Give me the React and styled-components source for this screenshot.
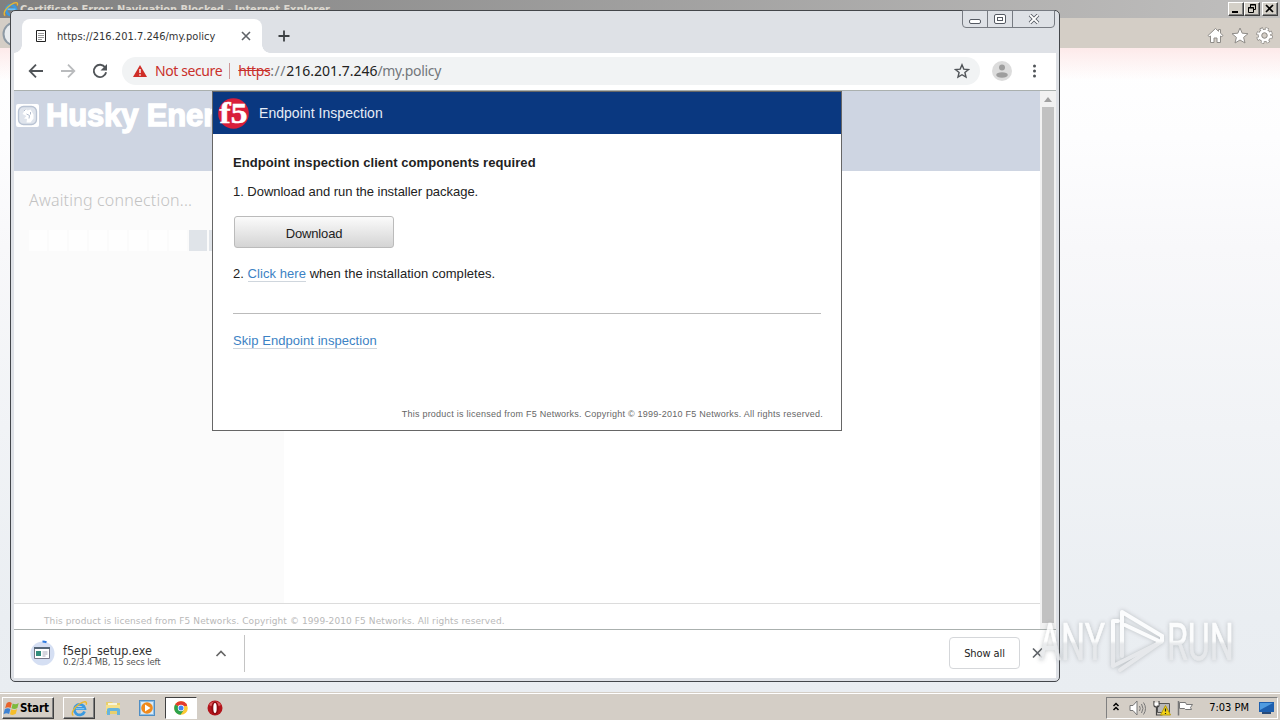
import React from 'react';
import styled, { createGlobalStyle } from 'styled-components';

const tahoma = "'DejaVu Sans Condensed', 'DejaVu Sans', sans-serif";
const arial = "'Liberation Sans', Arial, sans-serif";

const GlobalStyle = createGlobalStyle`
  * { box-sizing: border-box; }
  body { margin: 0; overflow: hidden; font-family: ${tahoma}; }
  svg { display: block; flex: none; }
`;

const Desktop = styled.div`
  position: relative;
  width: 1280px;
  height: 720px;
  overflow: hidden;
  display: flex;
  flex-direction: column;
`;

/* ---------- Internet Explorer in the back ---------- */

const IeTitleBar = styled.div`
  height: 18px;
  flex: none;
  display: flex;
  align-items: center;
  padding: 0 2px 0 3px;
  background: linear-gradient(90deg, #808080, #c0bfbe);
`;

const IeTitle = styled.span`
  flex: 1;
  color: #dcd8d0;
  font: bold 11px/16px ${tahoma};
  letter-spacing: -0.04px;
  padding: 1px 0 0 1px;
  white-space: nowrap;
`;

const ClassicButtons = styled.div`
  display: flex;
  margin-top: -1px;
`;

const ClassicButton = styled.div`
  width: 16px;
  height: 14px;
  margin-left: ${p => (p.$gap ? '2px' : 0)};
  background: #d4d0c8;
  border: 1px solid;
  border-color: #fff #404040 #404040 #fff;
  box-shadow: inset -1px -1px #808080;
`;

const IeToolBar = styled.div`
  height: 30px;
  flex: none;
  display: flex;
  align-items: center;
  justify-content: space-between;
  padding: 4px 7px 0 2px;
  background: #d4cec6;
`;

const IeTools = styled.div`
  display: flex;
  gap: 7px;
`;

const IeBody = styled.div`
  flex: 1;
  background:
    linear-gradient(#fdeaea, rgba(255, 255, 255, 0) 32px),
    linear-gradient(#ffffff 0, #fdfdfe 90px, #f8f8fa 200px, #f1f3f6 380px, #eaeef2 570px, #e9edf1 100%);
`;

/* ---------- Chrome window ---------- */

const ChromeWindow = styled.div`
  position: absolute;
  left: 10px;
  top: 10px;
  width: 1050px;
  height: 672px;
  padding: 0 3px 3px;
  display: flex;
  flex-direction: column;
  background: #dee1e6;
  border: 1px solid #43464a;
  border-radius: 5px;
`;

const TabStrip = styled.div`
  height: 42px;
  flex: none;
  display: flex;
  align-items: flex-end;
`;

const Tab = styled.div`
  position: relative;
  width: 240px;
  height: 34px;
  margin-left: 8px;
  padding: 0 10px 0 13px;
  display: flex;
  align-items: center;
  background: #fff;
  border-radius: 8px 8px 0 0;

  &::before,
  &::after {
    content: '';
    position: absolute;
    bottom: 0;
    width: 8px;
    height: 8px;
  }
  &::before {
    left: -8px;
    background: radial-gradient(circle at 0 0, #dee1e6 7.5px, #fff 8px);
  }
  &::after {
    right: -8px;
    background: radial-gradient(circle at 100% 0, #dee1e6 7.5px, #fff 8px);
  }
`;

const TabTitle = styled.span`
  flex: 1;
  margin-left: 10px;
  color: #333;
  font-size: 11px;
  letter-spacing: 0.03px;
  white-space: nowrap;
`;

const NewTab = styled.div`
  width: 44px;
  height: 34px;
  display: flex;
  align-items: center;
  justify-content: center;
`;

const CaptionButtons = styled.div`
  align-self: flex-start;
  margin: -1px 1px 0 auto;
  height: 18px;
  display: flex;
  border: 1px solid #777b82;
  border-radius: 0 0 4px 4px;
`;

const CaptionButton = styled.div`
  width: ${p => p.$width}px;
  display: flex;
  align-items: center;
  justify-content: center;
  border-left: ${p => (p.$first ? 'none' : '1px solid #777b82')};
`;

const ToolBar = styled.div`
  height: 38px;
  flex: none;
  display: flex;
  align-items: center;
  padding: 0 11px 2px 14px;
  background: #fff;
  border-bottom: 1px solid #aab0ae;
`;

const NavIcons = styled.div`
  display: flex;
  gap: 16px;
`;

const Omnibox = styled.div`
  height: 28px;
  width: 858px;
  margin-left: 14px;
  padding: 0 10px;
  display: flex;
  align-items: center;
  background: #f1f3f4;
  border-radius: 14px;
  font-family: 'Noto Sans', 'Open Sans', sans-serif;
  font-size: 14px;
  white-space: nowrap;
`;

const NotSecure = styled.span`
  margin-left: 7px;
  color: #c9302b;
  letter-spacing: -0.4px;
`;

const Divider = styled.span`
  width: 1px;
  height: 16px;
  margin: 0 8px 0 7px;
  background: #c99;
`;

const Url = styled.span`
  flex: 1;
  color: #73777b;
  letter-spacing: -0.33px;

  s { color: #c9302b; letter-spacing: -0.42px; }
  i { font-style: normal; letter-spacing: 0.6px; }
  b { color: #222; font-weight: 400; letter-spacing: 0; }
`;

const Avatar = styled.div`
  margin: 0 auto 0 12px;
`;

const PageArea = styled.div`
  height: 538px;
  flex: none;
  display: flex;
  background: #fff;
`;

const Page = styled.div`
  flex: 1;
  display: flex;
  flex-direction: column;
`;

const Banner = styled.div`
  height: 80px;
  padding: 8px 0 0 2px;
  display: flex;
  align-items: flex-start;
  gap: 6px;
  overflow: hidden;
  background: #ced5e2;
`;

const BrandName = styled.span`
  color: #fff;
  font: bold 31px/33px ${arial};
  letter-spacing: -0.15px;
  -webkit-text-stroke: 1.4px #fff;
  white-space: nowrap;
`;

const SidePanel = styled.div`
  flex: 1;
  width: 270px;
  padding: 17px 0 0 15px;
  background: #fbfbfb;
`;

const Waiting = styled.div`
  color: #c2c2c2;
  font: 300 16px/24px 'Noto Sans', 'Open Sans', sans-serif;
  letter-spacing: 0.2px;
  white-space: nowrap;
`;

const ProgressRow = styled.div`
  margin-top: 18px;
  display: flex;
  gap: 2px;
`;

const ProgressCell = styled.div`
  width: 18px;
  height: 21px;
  background: ${p => (p.$on ? '#e0e4e9' : '#fefefe')};
`;

const PageFooter = styled.div`
  height: 26px;
  padding: 9px 0 0 30px;
  border-top: 1px solid #dcdcdc;
  background: #fff;
  color: #b9b9b9;
  font: 9px/16px 'DejaVu Sans', sans-serif;
  letter-spacing: 0.09px;
  white-space: nowrap;
`;

const ScrollBar = styled.div`
  width: 16px;
  display: flex;
  flex-direction: column;
  align-items: center;
  padding-top: 6px;
  background: #f1f1f1;
`;

const ScrollThumb = styled.div`
  width: 12px;
  height: 516px;
  margin-top: 5px;
  background: #c1c1c1;
`;

const DownloadShelf = styled.div`
  flex: 1;
  display: flex;
  align-items: center;
  padding: 0 12px 2px 15px;
  border-top: 1px solid #aab0ae;
  background: #fff;
`;

const DownloadText = styled.div`
  width: 151px;
  margin-left: 7px;
  padding-top: 3px;
  white-space: nowrap;
`;

const FileName = styled.div`
  color: #333;
  font: 12.5px/13px ${tahoma};
`;

const FileStatus = styled.div`
  color: #555;
  font: 9.5px/9px ${tahoma};
  letter-spacing: -0.12px;
`;

const ShelfDivider = styled.div`
  width: 1px;
  height: 37px;
  margin-left: 16px;
  background: #c4c4c4;
`;

const ShowAll = styled.div`
  width: 71px;
  height: 32px;
  margin: 0 11px 0 auto;
  border: 1px solid #d5d7da;
  border-radius: 4px;
  color: #222;
  font: 11px/31px ${tahoma};
  letter-spacing: -0.1px;
  text-align: center;
`;

/* ---------- Endpoint inspection dialog ---------- */

const Dialog = styled.div`
  position: absolute;
  left: 212px;
  top: 91px;
  width: 630px;
  height: 340px;
  border: 1px solid #666;
  background: #fff;
  color: #222;
  font: 13px/16px ${arial};
  white-space: nowrap;
`;

const DialogHeader = styled.div`
  height: 42px;
  display: flex;
  align-items: center;
  gap: 10px;
  padding-left: 5px;
  background: #0a3880;
  color: #e6ecf6;
  font-size: 14px;
  letter-spacing: 0.04px;
`;

const DialogBody = styled.div`
  padding: 21px 20px 0;
`;

const DialogTitle = styled.div`
  font-weight: bold;
  letter-spacing: 0.08px;
`;

const Step = styled.div`
  margin-top: ${p => p.$top}px;
  letter-spacing: ${p => p.$spacing}px;
`;

const Link = styled.span`
  color: #3c82c4;
  border-bottom: 1px solid #cfd6dd;
  letter-spacing: 0.06px;
`;

const DownloadButton = styled.div`
  width: 160px;
  height: 32px;
  margin: 16px 0 0 1px;
  border: 1px solid #bbb;
  border-radius: 3px;
  background: linear-gradient(#fbfbfb, #d4d4d4);
  line-height: 33px;
  text-align: center;
  letter-spacing: -0.15px;
`;

const Rule = styled.div`
  height: 1px;
  margin: 31px 0 19px;
  background: #bbb;
`;

const License = styled.div`
  margin: 58px -2px 0 0;
  color: #666;
  font-size: 9px;
  line-height: 14px;
  letter-spacing: 0.24px;
  text-align: right;
`;

/* ---------- Taskbar ---------- */

const TaskBar = styled.div`
  height: 28px;
  flex: none;
  display: flex;
  align-items: center;
  padding: 3px 2px 0;
  background: #d4cec6;
  border-top: 1px solid #d4cec6;
  box-shadow: inset 0 1px #fff;
`;

const TaskButton = styled.div`
  width: ${p => p.$width || 32}px;
  height: 22px;
  margin-left: ${p => p.$left || 0}px;
  display: flex;
  align-items: center;
  justify-content: ${p => (p.$width ? 'flex-start' : 'center')};
  background: ${p => (p.$pressed ? '#fff' : 'transparent')};
  border: ${p => (p.$flat ? 'none' : '1px solid')};
  border-color: ${p => (p.$pressed ? '#404040 #fff #fff #404040' : '#fff #404040 #404040 #fff')};
  box-shadow: ${p => (p.$flat || p.$pressed ? 'none' : 'inset -1px -1px #808080')};
  color: #000;
  font: bold 11.5px/20px ${tahoma};
  letter-spacing: -0.15px;
`;

const Tray = styled.div`
  width: 172px;
  height: 22px;
  margin-left: auto;
  padding: 0 2px 0 5px;
  display: flex;
  align-items: center;
  border: 1px solid;
  border-color: #808080 #fff #fff #808080;
`;

const Clock = styled.span`
  margin: 0 10px 0 auto;
  color: #000;
  font: 11px/18px ${tahoma};
`;

const Watermark = styled.svg`
  position: absolute;
  left: 1034px;
  top: 604px;
  overflow: visible;
  filter: drop-shadow(0 0 2px rgba(120, 125, 130, 0.5));
`;

/* ---------- Icons ---------- */

const IeLogo = ({ size = 16 }) => (
  <svg width={size} height={size} viewBox="0 0 16 16" fill="none">
    <path d="M12.8 10.8A5 5 0 1 1 13 8H4.5" stroke="#3b9ae0" strokeWidth="2.6" />
    <path d="M12.5 8.2H4.6" stroke="#8fd0f5" strokeWidth="1" />
    <path d="M2.2 14.6C-.6 12.6 3 7 7.5 4S15.500 .5 14.300 4.500" stroke="#edb72c" strokeWidth="1.3" />
  </svg>
);

const FlagLogo = () => (
  <svg width="17" height="17" viewBox="0 0 17 17">
    <path d="M3.500 3.500Q6 1 8.800 3L7.600 8Q5 6.200 2.100 8.300Z" fill="#e8632b" />
    <path d="M9.700 3.500Q12.500 5.200 15.700 3L14.400 8Q11.500 10 8.500 8.300Z" fill="#7dba3c" />
    <path d="M1.800 9.200Q4.700 7.200 7.400 9L6.100 14Q3.400 12.200.5 14.300Z" fill="#3f83d3" />
    <path d="M8.200 9.300Q11.200 11 14.100 9L12.800 13.800Q9.800 15.800 7 14.200Z" fill="#f5bd2a" />
  </svg>
);

const F5Logo = () => (
  <svg width="31" height="32" viewBox="0 0 31 32">
    <circle cx="15.500" cy="16.500" r="15.300" fill="#d81e3a" />
    <text x="1.500" y="26" fill="#fff" stroke="#fff" strokeWidth=".5" fontFamily="'Liberation Serif', serif" fontWeight="bold" fontSize="30" textLength="28" lengthAdjust="spacingAndGlyphs">f5</text>
  </svg>
);

const HuskyLogo = () => (
  <svg width="24" height="31" viewBox="0 0 24 31">
    <rect x="0" y="5" width="23" height="23" rx="2" fill="#fff" />
    <rect x="2.500" y="7.500" width="18" height="18" rx="5" fill="#dfe4ec" stroke="#b9c3d3" strokeWidth="1.300" />
    <path d="M6.500 15l3-5 2 1.500 3-1 3 5v4l-3 4h-4l.5-3.500-3-.5 2.500-2.500z" fill="#fff" />
    <path d="M10.500 15l3 1.500-.5 3M14.500 13v2.500M8 12l1.500-1.500" stroke="#b2bccd" fill="none" />
  </svg>
);

const ExplorerIcon = () => (
  <svg width="17" height="16" viewBox="0 0 17 16">
    <path d="M1 2h6l1 1h7v11H1z" fill="#e8cf6d" />
    <path d="M3 3h9v3H3z" fill="#f8f4d8" />
    <path d="M1 5h14v6H1z" fill="#f5e08a" />
    <path d="M2 15V9.500Q2 8 4 8h9q2 0 2 1.500V15h-3v-4H5v4z" fill="#67b4dd" />
  </svg>
);

const PlayerIcon = () => (
  <svg width="16" height="16" viewBox="0 0 16 16">
    <rect x=".5" y=".5" width="15" height="15" fill="#8fbfe6" stroke="#4f8ec4" />
    <rect x="2" y="2" width="12" height="12" fill="#d9ebf8" />
    <circle cx="8" cy="8" r="5.800" fill="#f08a1d" />
    <path d="M6 4.500v7L11.500 8z" fill="#fff" />
  </svg>
);

const ChromeIcon = () => (
  <svg width="14" height="14" viewBox="0 0 14 14">
    <circle cx="7" cy="7" r="6.800" fill="#fcc934" />
    <path d="M7 7L1.100 3.600A6.800 6.800 0 0 1 12.900 3.600z" fill="#e33b2e" />
    <path d="M7 7L1.100 3.600A6.800 6.800 0 0 0 6.600 13.800L9.900 8.700z" fill="#2da24c" />
    <path d="M7 3.600h5.900L13 5H7z" fill="#e33b2e" />
    <circle cx="7" cy="7" r="3.200" fill="#fff" />
    <circle cx="7" cy="7" r="2.500" fill="#4285f4" />
  </svg>
);

const OperaIcon = () => (
  <svg width="16" height="16" viewBox="0 0 16 16">
    <circle cx="8" cy="8" r="7.500" fill="#b3141b" />
    <path d="M2 5a7 7 0 0 1 12 0L8 8z" fill="#dc5a5c" />
    <ellipse cx="8" cy="8" rx="3.600" ry="6.500" fill="#8d0b10" />
    <ellipse cx="8" cy="8" rx="1.700" ry="5" fill="#fff" />
  </svg>
);

const TrayIcons = () => (
  <svg width="88" height="18" viewBox="0 0 88 18" fill="none">
    <path d="M1.500 7L4 4.500 6.500 7M1.500 11L4 8.500 6.500 11" stroke="#000" strokeWidth="1.500" />
    <path d="M18 6.500h3l4-4.500v14l-4-4.500h-3z" fill="#fff" stroke="#777" />
    <path d="M27.500 7q1.500 2.500 0 5M29.500 5q3 4.500 0 9M31.500 3.500q4 6 0 12" stroke="#777" />
    <path d="M45.500 4.500h12v9h-12z" fill="#b8b8b8" stroke="#555" />
    <path d="M42 2v4q0 2 2.500 2t2.500-2V2M44.500 8v8h6" stroke="#444" strokeWidth="1.200" />
    <path d="M42.500 3.500h4v3h-4z" fill="#fff" />
    <path d="M53.500 6.500l5 9.500h-10z" fill="#f3d313" stroke="#b59b12" />
    <path d="M53.500 9.500v3M53.500 14v1" stroke="#222" strokeWidth="1.200" />
    <path d="M66.500 2v14.500" stroke="#777" strokeWidth="1.500" />
    <path d="M67.500 3.500h6l1 2h6l-2 3 1 2h-6l-1-1h-5z" fill="#fff" stroke="#777" />
  </svg>
);

const cells = Array.from({ length: 10 }, (_, i) => i >= 8);

const App = () => {
  return (
    <>
      <GlobalStyle />
      <Desktop>
        <IeTitleBar>
          <IeLogo size={16} />
          <IeTitle>Certificate Error: Navigation Blocked - Internet Explorer</IeTitle>
          <ClassicButtons>
            <ClassicButton>
              <svg width="14" height="12"><path d="M3 8h6v2H3z" /></svg>
            </ClassicButton>
            <ClassicButton>
              <svg width="14" height="12" fill="none" stroke="#000">
                <path d="M5.500 4V1.500h5v5H9M5 2h6" />
                <path d="M3.500 4.500h5v5h-5zM3 5h6" />
              </svg>
            </ClassicButton>
            <ClassicButton $gap>
              <svg width="14" height="12"><path d="M3 2l7 7M10 2l-7 7" stroke="#000" strokeWidth="1.700" /></svg>
            </ClassicButton>
          </ClassicButtons>
        </IeTitleBar>
        <IeToolBar>
          <svg width="26" height="26" viewBox="0 0 26 26">
            <circle cx="13" cy="12" r="11.500" fill="#e8ecef" stroke="#8d9aa5" strokeWidth="2" />
          </svg>
          <IeTools>
            <svg width="17" height="17" viewBox="0 0 17 17">
              <path d="M8.500 1.500L1 8.500l1.200 1.300L3.500 9v6.500h3.500V11h3v4.500h3.500V9l1.300.8L16 8.500l-2.500-2.300V2.500h-2v1.800z" fill="#fff" stroke="#8f8c88" />
            </svg>
            <svg width="18" height="17" viewBox="0 0 18 17">
              <path d="M9 1l2.200 5.200 5.800.5-4.400 3.700 1.400 5.600-5-3-5 3 1.400-5.600L1 6.700l5.800-.5z" fill="#fff" stroke="#8f8c88" />
            </svg>
            <svg width="17" height="17" viewBox="0 0 17 17">
              <circle cx="8.500" cy="8.500" r="6.500" fill="none" stroke="#8f8c88" strokeWidth="3.800" strokeDasharray="3 2.105" />
              <circle cx="8.500" cy="8.500" r="5.300" fill="none" stroke="#8f8c88" strokeWidth="2.800" />
              <circle cx="8.500" cy="8.500" r="6.300" fill="none" stroke="#fff" strokeWidth="2.600" strokeDasharray="2 2.948" strokeDashoffset="-.5" />
              <circle cx="8.500" cy="8.500" r="4.400" fill="none" stroke="#fff" strokeWidth="2.900" />
              <circle cx="8.500" cy="8.500" r="2.700" fill="#d4cec6" stroke="#8f8c88" />
            </svg>
          </IeTools>
        </IeToolBar>
        <IeBody />
        <TaskBar>
          <TaskButton $width={52}>
            <FlagLogo />Start
          </TaskButton>
          <TaskButton $left={9}><IeLogo size={17} /></TaskButton>
          <TaskButton $left={2} $flat><ExplorerIcon /></TaskButton>
          <TaskButton $left={2} $flat><PlayerIcon /></TaskButton>
          <TaskButton $left={2} $pressed><ChromeIcon /></TaskButton>
          <TaskButton $left={2} $flat><OperaIcon /></TaskButton>
          <Tray>
            <TrayIcons />
            <Clock>7:03 PM</Clock>
            <svg width="16" height="14" viewBox="0 0 16 14">
              <path d="M0 1h15v10H0z" fill="#1d5fae" />
              <path d="M1 2h13L1 9z" fill="#4f9be0" />
              <path d="M3 11h9v2H3z" fill="#274a78" />
            </svg>
          </Tray>
        </TaskBar>

        <ChromeWindow>
          <TabStrip>
            <Tab>
              <svg width="12" height="14" viewBox="0 0 12 14" fill="none">
                <path d="M1.500 1.500h9v11h-9z" stroke="#222" />
                <path d="M3 4.500h6M3 6.500h6M3 8.500h6M3 10.500h4" stroke="#999" />
              </svg>
              <TabTitle>https://216.201.7.246/my.policy</TabTitle>
              <svg width="12" height="12" viewBox="0 0 12 12">
                <path d="M2 2l8 8M10 2l-8 8" stroke="#5f6368" strokeWidth="1.600" />
              </svg>
            </Tab>
            <NewTab>
              <svg width="12" height="12" viewBox="0 0 12 12">
                <path d="M6 .5v11M.5 6h11" stroke="#3c4043" strokeWidth="1.800" />
              </svg>
            </NewTab>
            <CaptionButtons>
              <CaptionButton $width={24} $first>
                <svg width="12" height="12"><rect x=".5" y="6.500" width="11" height="4" rx="1.500" fill="#fff" stroke="#555a63" /></svg>
              </CaptionButton>
              <CaptionButton $width={25}>
                <svg width="12" height="11" fill="#fff" stroke="#555a63">
                  <rect x=".5" y=".5" width="11" height="9" rx="1.500" />
                  <rect x="3.500" y="3.500" width="5" height="3" />
                </svg>
              </CaptionButton>
              <CaptionButton $width={42}>
                <svg width="12" height="11">
                  <path d="M2 1l8 8M10 1L2 9" stroke="#555a63" strokeWidth="3.600" />
                  <path d="M2 1l8 8M10 1L2 9" stroke="#fff" strokeWidth="1.800" />
                </svg>
              </CaptionButton>
            </CaptionButtons>
          </TabStrip>

          <ToolBar>
            <NavIcons>
              <svg width="16" height="16" viewBox="0 0 16 16" fill="none" stroke="#505458" strokeWidth="1.800">
                <path d="M15 8H2M8 1.700L1.700 8 8 14.300" />
              </svg>
              <svg width="16" height="16" viewBox="0 0 16 16" fill="none" stroke="#b9bbbd" strokeWidth="1.800">
                <path d="M1 8h13M8 1.700L14.300 8 8 14.300" />
              </svg>
              <svg width="16" height="16" viewBox="0 0 16 16">
                <path d="M13.200 4.500A6.200 6.200 0 1 0 14.100 9.200" fill="none" stroke="#505458" strokeWidth="1.900" />
                <path d="M15 1v6.500H8.500z" fill="#505458" />
              </svg>
            </NavIcons>
            <Omnibox>
              <svg width="16" height="14" viewBox="0 0 16 14">
                <path d="M8 1l7 12H1z" fill="#cf2e28" />
                <path d="M8 5v4M8 10.200v1.500" stroke="#fff" strokeWidth="1.400" />
              </svg>
              <NotSecure>Not secure</NotSecure>
              <Divider />
              <Url><s>https</s><i>://</i><b>216.201.7.246</b>/my.policy</Url>
              <svg width="16" height="16" viewBox="0 0 16 16">
                <path d="M8 1.800l1.800 4.300 4.700.4-3.600 3 1.100 4.600L8 11.700 4 14.100l1.100-4.600-3.600-3 4.700-.4z" fill="none" stroke="#505458" strokeWidth="1.400" />
              </svg>
            </Omnibox>
            <Avatar>
              <svg width="20" height="20" viewBox="0 0 20 20">
                <circle cx="10" cy="10" r="10" fill="#dcdcdc" />
                <circle cx="10" cy="6.500" r="3" fill="#9e9e9e" />
                <ellipse cx="10" cy="14" rx="5.800" ry="2.700" fill="#9e9e9e" />
              </svg>
            </Avatar>
            <svg width="20" height="16" viewBox="0 0 20 16" fill="#505458">
              <circle cx="9.500" cy="3" r="1.500" />
              <circle cx="9.500" cy="8" r="1.500" />
              <circle cx="9.500" cy="13" r="1.500" />
            </svg>
          </ToolBar>

          <PageArea>
            <Page>
              <Banner>
                <HuskyLogo />
                <BrandName>Husky Energy</BrandName>
              </Banner>
              <SidePanel>
                <Waiting>Awaiting connection...</Waiting>
                <ProgressRow>
                  {cells.map((on, i) => <ProgressCell key={i} $on={on} />)}
                </ProgressRow>
              </SidePanel>
              <PageFooter>This product is licensed from F5 Networks. Copyright © 1999-2010 F5 Networks. All rights reserved.</PageFooter>
            </Page>
            <ScrollBar>
              <svg width="8" height="5"><path d="M4 0l4 5H0z" fill="#a0a0a0" /></svg>
              <ScrollThumb />
            </ScrollBar>
          </PageArea>

          <DownloadShelf>
            <svg width="27" height="27" viewBox="0 0 27 27">
              <circle cx="13.500" cy="13.500" r="12" fill="#d5dff3" />
              <path d="M13.500 1.500a12 12 0 0 1 4 .7" stroke="#2f7be0" strokeWidth="2" fill="none" />
              <path d="M5.500 7.500h15v11h-15z" fill="#fff" stroke="#778" />
              <path d="M5 8h16" stroke="#567" strokeWidth="2" />
              <path d="M7 11h5v5H7z" fill="#338d7d" />
              <path d="M13.500 12h5M13.500 14h5M13.500 16h3" stroke="#aab" />
            </svg>
            <DownloadText>
              <FileName>f5epi_setup.exe</FileName>
              <FileStatus>0.2/3.4 MB, 15 secs left</FileStatus>
            </DownloadText>
            <svg width="14" height="10" viewBox="0 0 14 10">
              <path d="M2.500 8L7 3.500 11.500 8" fill="none" stroke="#666" strokeWidth="1.700" />
            </svg>
            <ShelfDivider />
            <ShowAll>Show all</ShowAll>
            <svg width="13" height="12" viewBox="0 0 13 12">
              <path d="M2 1.500l9 9M11 1.500l-9 9" stroke="#5f6368" strokeWidth="1.700" />
            </svg>
          </DownloadShelf>
        </ChromeWindow>

        <Dialog>
          <DialogHeader>
            <F5Logo />
            Endpoint Inspection
          </DialogHeader>
          <DialogBody>
            <DialogTitle>Endpoint inspection client components required</DialogTitle>
            <Step $top={13} $spacing={-0.03}>1. Download and run the installer package.</Step>
            <DownloadButton>Download</DownloadButton>
            <Step $top={18} $spacing={0.04}>2. <Link>Click here</Link> when the installation completes.</Step>
            <Rule />
            <Link>Skip Endpoint inspection</Link>
            <License>This product is licensed from F5 Networks. Copyright © 1999-2010 F5 Networks. All rights reserved.</License>
          </DialogBody>
        </Dialog>

        <Watermark width="206" height="74" viewBox="0 0 206 74" opacity="0.85">
          <defs>
            <linearGradient id="fade" gradientUnits="userSpaceOnUse" x1="0" y1="0" x2="0" y2="74">
              <stop offset=".5" stopColor="#fff" />
              <stop offset=".54" stopColor="#e6e8ea" />
            </linearGradient>
          </defs>
          <g fill="url(#fade)" stroke="url(#fade)" strokeWidth=".6" fontFamily="Roboto, sans-serif" fontSize="52">
            <text x="5" y="56" textLength="66" lengthAdjust="spacingAndGlyphs">ANY</text>
            <text x="133" y="56" textLength="67" lengthAdjust="spacingAndGlyphs">RUN</text>
          </g>
          <g fill="none" stroke="url(#fade)" strokeWidth="4" strokeLinejoin="round" strokeLinecap="round">
            <path d="M84 17h-5v45l48-24" />
            <path d="M88 52V8l40 24" />
            <path d="M91 21l36 17" />
            <path d="M86 66l42-29v-5" />
          </g>
        </Watermark>
      </Desktop>
    </>
  );
};

export default App;
